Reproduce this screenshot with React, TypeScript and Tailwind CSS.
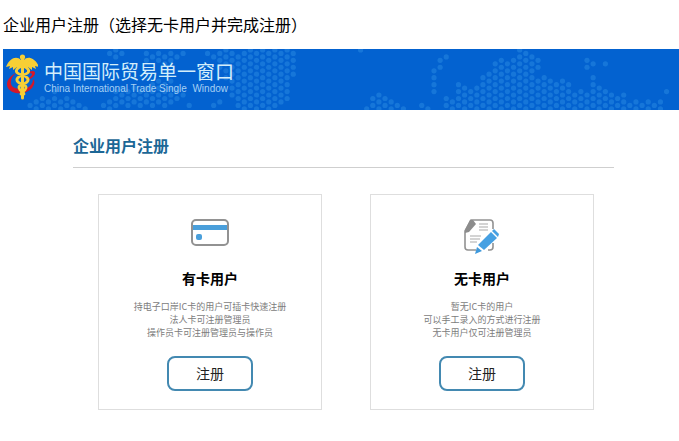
import type { ReactNode } from 'react';

// [column, first row, last row] of the dotted world map in the banner
const dotRuns = [
    [-66, 8, 8], [-65, 7, 8], [-64, 7, 8], [-63, 7, 8], [-62, 6, 8], [-61, 7, 8],
    [-60, 7, 8], [-59, 7, 8], [-58, 8, 8], [-57, 8, 8], [-54, 8, 8], [-53, 0, 0],
    [-53, 7, 8], [-52, 0, 1], [-52, 6, 8], [-51, 0, 0], [-51, 5, 7], [-50, 6, 8],
    [-49, 5, 7], [-48, 6, 8], [-47, 0, 1], [-47, 5, 7], [-46, 1, 1], [-46, 5, 8],
    [-45, 0, 1], [-45, 4, 7], [-44, 1, 2], [-44, 5, 8], [-43, 0, 1], [-43, 4, 7],
    [-42, 1, 1], [-42, 6, 7], [-41, 0, 0], [-41, 6, 6], [-40, 8, 8],
    [-37, 0, 0], [-36, 1, 1], [-36, 8, 8], [-35, 0, 2], [-35, 7, 7], [-34, 0, 4],
    [-33, 0, 6], [-32, 1, 8], [-31, 0, 8], [-30, 0, 8], [-29, 0, 8], [-28, 0, 8],
    [-27, 0, 8], [-26, 0, 8], [-25, 0, 7], [-24, 0, 7], [-23, 0, 3],
    [-12, 0, 0], [-11, 8, 8], [-10, 7, 8], [-9, 6, 8], [-8, 7, 8], [-7, 7, 8],
    [-6, 8, 8], [-5, 8, 8], [-2, 8, 8], [-1, 8, 8],
    [0, 3, 6], [1, 1, 2], [2, 1, 1], [2, 7, 8], [3, 7, 8], [4, 5, 8], [5, 5, 8],
    [6, 6, 8], [7, 5, 8], [8, 4, 8], [9, 3, 8], [10, 2, 8], [11, 1, 8], [12, 2, 8],
    [13, 1, 8], [14, 0, 8], [15, 0, 8], [16, 1, 8], [17, 1, 2], [17, 4, 8],
    [18, 4, 8], [19, 4, 8], [20, 5, 8], [21, 4, 8], [22, 5, 8], [23, 6, 8],
    [24, 6, 8], [25, 1, 2], [25, 6, 8], [26, 2, 2], [26, 4, 8], [27, 5, 8],
    [28, 2, 2], [28, 6, 8], [29, 6, 8], [30, 7, 8], [31, 6, 8], [32, 8, 8],
    [33, 7, 8], [34, 8, 8], [35, 7, 8], [36, 8, 8], [37, 7, 8], [38, 6, 6]
];

const dots = dotRuns.flatMap(([col, first, last]) =>
    Array.from({ length: last - first + 1 }, (_, i) => ({
        x: 431 + col * 6.12,
        y: (col % 2 === 0 ? 1 : 4.4) + (first + i) * 6.93
    }))
);

function DotMap() {
    return (
        <svg className="absolute inset-0 h-full w-full" aria-hidden="true">
            {dots.map((dot) => (
                <circle
                    key={`${dot.x}-${dot.y}`}
                    cx={dot.x}
                    cy={dot.y}
                    r="2.6"
                    fill="#3b9bea"
                    fillOpacity="0.36"
                />
            ))}
        </svg>
    );
}

function Emblem() {
    return (
        <svg width="32" height="46" viewBox="0 0 32 46" fill="none" aria-hidden="true">
            <path
                d="M10 19C3 22-1 29 2 34c4 7 18 7 24 0 3-4 3-7 1-9 0 6-5 10-12 10C8 35 4 32 5 27c0-3 2-5 5-8z"
                fill="#d3182b"
            />
            <path d="M20 19c4-2 9-3 9 0 0 4-6 7-10 8 4-3 7-5 7-7 0-1-3-1-6-1z" fill="#d3182b" />
            <path
                d="M15 6C11 2 4 3 0 13l4-1-1 3 4-2 0 3 4-3 0 3 4-2h3l4 2 0-3 4 3 0-3 4 2-1-3 4 1C29 3 21 2 18 6z"
                fill="#f7cf35"
            />
            <circle cx="16.5" cy="3" r="2.6" fill="#f7cf35" />
            <path d="M16.5 4v40" stroke="#f7cf35" strokeWidth="3" strokeLinecap="round" />
            <path
                d="M12 14c-4 4 0 6 4 7s8 4 5 7-9 2-8 6 5 3 5 6M21 14c4 4 0 6-4 7s-8 4-5 7 9 2 8 6-5 3-5 6"
                stroke="#f7cf35"
                strokeWidth="2.8"
                strokeLinecap="round"
            />
        </svg>
    );
}

function CardIcon() {
    return (
        <svg width="40" height="36" viewBox="0 0 40 36" fill="none" aria-hidden="true">
            <path d="M2 7h35v5H2z" fill="#4a9fdb" />
            <rect x="6" y="16" width="6" height="6" rx="2" fill="#4a9fdb" />
            <rect x="2" y="2" width="36" height="25" rx="4" stroke="#929292" strokeWidth="2" />
        </svg>
    );
}

function FormIcon() {
    return (
        <svg width="40" height="36" viewBox="0 0 40 36" fill="none" aria-hidden="true">
            <path
                d="M14 32H6c-2 0-3-1-3-3V13L9 2h19c2 0 3 1 3 3v6M31 25v4c0 2-1 3-3 3h-2"
                stroke="#929292"
                strokeWidth="1.6"
            />
            <path d="M3 15V12L8 2h3l3 4-7 8z" fill="#8c8c8c" />
            <path d="M17 6h9M17 9h9M17 12h9M8 18h11M8 21h10M8 24h7" stroke="#a9a9a9" />
            <path d="M16 27l13-13 6 6-13 12z" fill="#46a0e2" />
            <path d="M15 29l-2 7 7-3z" fill="#3e99dc" />
            <path d="M30 13l2-2 5 5-1 3z" fill="#46a0e2" />
        </svg>
    );
}

type UserCardProps = {
    icon: ReactNode;
    title: string;
    lines: string[];
};

function UserCard({ icon, title, lines }: UserCardProps) {
    return (
        <div className="flex flex-col items-center border border-[#dedede] px-2 pt-[23px] pb-[18px] text-center">
            {icon}
            <h3 className="mt-[14px] text-[14px] leading-5 font-bold text-black">{title}</h3>
            <div className="mt-3 text-[9px] leading-[13px] text-[#7c7c7c]">
                {lines.map((line) => (
                    <p key={line}>{line}</p>
                ))}
            </div>
            <button
                type="button"
                className="mt-[17px] h-[35px] w-[86px] rounded-lg border-2 border-[#4389b1] pb-0.5 text-[14px] leading-5 text-[#222]"
            >
                注册
            </button>
        </div>
    );
}

export default function App() {
    return (
        <main className="min-h-screen bg-white pt-3 pl-[3px] font-['Noto_Sans_CJK_SC',sans-serif]">
            <h1 className="text-[16px] leading-6 text-black">
                企业用户注册（选择无卡用户并完成注册）
            </h1>

            {/* Banner */}
            <header className="relative mt-[13px] flex h-[61px] items-center gap-1.5 overflow-hidden bg-[#0362d0] pb-1.5 pl-[3px]">
                <DotMap />
                <div className="relative">
                    <Emblem />
                </div>
                <div className="relative text-[#d3eefb]">
                    <p className="text-[19px] leading-6">中国国际贸易单一窗口</p>
                    <p className="font-['Liberation_Sans',Arial,sans-serif] text-[10px] leading-3 text-[#a5d0f4]">
                        China International Trade Single&nbsp; Window
                    </p>
                </div>
            </header>

            {/* Registration */}
            <section className="pt-[23px] pr-[65px] pl-[70px]">
                <h2 className="border-b border-[#cfcfcf] pb-[10px] text-[16px] leading-6 font-bold text-[#1c6796]">
                    企业用户注册
                </h2>
                <div className="mt-[26px] grid grid-cols-2 gap-12 pr-5 pl-[25px]">
                    <UserCard
                        icon={<CardIcon />}
                        title="有卡用户"
                        lines={[
                            '持电子口岸IC卡的用户可插卡快速注册',
                            '法人卡可注册管理员',
                            '操作员卡可注册管理员与操作员'
                        ]}
                    />
                    <UserCard
                        icon={<FormIcon />}
                        title="无卡用户"
                        lines={[
                            '暂无IC卡的用户',
                            '可以手工录入的方式进行注册',
                            '无卡用户仅可注册管理员'
                        ]}
                    />
                </div>
            </section>
        </main>
    );
}
